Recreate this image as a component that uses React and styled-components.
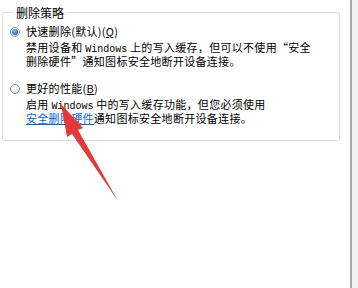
import React from "react";
import styled, { createGlobalStyle } from "styled-components";

const Global = createGlobalStyle`
  html, body { margin: 0; padding: 0; background: #ffffff; }
  body { font-family: "Noto Sans CJK SC", "Noto Sans", sans-serif; }
`;

const Page = styled.div`
  position: relative;
  display: flex;
  width: 358px;
  height: 288px;
  overflow: hidden;
  background: #ffffff;
`;

const Main = styled.div`
  flex: 1;
  padding: 6px 0 0 2px;
`;

const Rail = styled.div`
  width: 6px;
  border-left: 2px solid #a9a9a9;
  background: #f0f0f0;
`;

const Group = styled.fieldset`
  margin: 0;
  width: 338px;
  box-sizing: border-box;
  height: 135px;
  border: 1px solid #dcdcdc;
  border-radius: 3px;
  padding: 6px 0 0 7px;
  display: flex;
  flex-direction: column;
  gap: 14px;
`;

const Legend = styled.legend`
  margin-left: 4px;
  padding: 0 2px;
  font-size: 12px;
  line-height: 13px;
  color: #000;
`;

const Option = styled.div`
  display: flex;
  flex-direction: column;
  gap: 3px;
`;

const OptionLabel = styled.label`
  display: flex;
  align-items: center;
  gap: 6px;
  font-size: 11px;
  line-height: 13px;
  letter-spacing: 0.3px;
  color: #000;
`;

const Radio = styled.span`
  position: relative;
  width: 10px;
  height: 10px;
  box-sizing: border-box;
  border-radius: 50%;
  border: 1px solid #8f9396;
  background: radial-gradient(circle at 40% 35%, #ffffff 0%, #e4e4e4 70%, #d0d0d0 100%);
  flex-shrink: 0;
  &::after {
    content: "";
    display: ${(p) => (p.$checked ? "block" : "none")};
    position: absolute;
    left: 1px;
    top: 1px;
    width: 6px;
    height: 6px;
    border-radius: 50%;
    background: radial-gradient(circle at 40% 35%, #8cc4f2 0%, #2a74c4 60%, #184f8c 100%);
  }
`;

const Desc = styled.p`
  margin: 0 0 0 16px;
  font-size: 11px;
  line-height: 13px;
  letter-spacing: 0.3px;
  color: #000;
  white-space: nowrap;
`;

const Latin = styled.span`
  font-family: "Liberation Mono", monospace;
  font-size: 10px;
  line-height: 1;
  letter-spacing: 0;
`;

const Link = styled.a`
  color: #0a64c8;
  text-decoration: underline;
`;

const ArrowLayer = styled.svg`
  position: absolute;
  left: 0;
  top: 0;
  pointer-events: none;
`;

export default function App() {
  return (
    <>
      <Global />
      <Page>
        <Main>
          <Group>
            <Legend>删除策略</Legend>
            <Option>
              <OptionLabel>
                <Radio $checked />
                <span>快速删除(默认)(<u>Q</u>)</span>
              </OptionLabel>
              <Desc>
                禁用设备和 <Latin>Windows</Latin> 上的写入缓存，但可以不使用“安全
                <br />
                删除硬件”通知图标安全地断开设备连接。
              </Desc>
            </Option>
            <Option>
              <OptionLabel>
                <Radio />
                <span>更好的性能(<u>B</u>)</span>
              </OptionLabel>
              <Desc>
                启用 <Latin>Windows</Latin> 中的写入缓存功能，但您必须使用
                <br />
                <Link>安全删除硬件</Link>通知图标安全地断开设备连接。
              </Desc>
            </Option>
          </Group>
        </Main>
        <Rail />
        <ArrowLayer width="358" height="288" viewBox="0 0 358 288">
          <polygon
            points="61,104 83,128 78,130 118,201 72,134 67,137"
            fill="#e5383b"
          />
        </ArrowLayer>
      </Page>
    </>
  );
}
